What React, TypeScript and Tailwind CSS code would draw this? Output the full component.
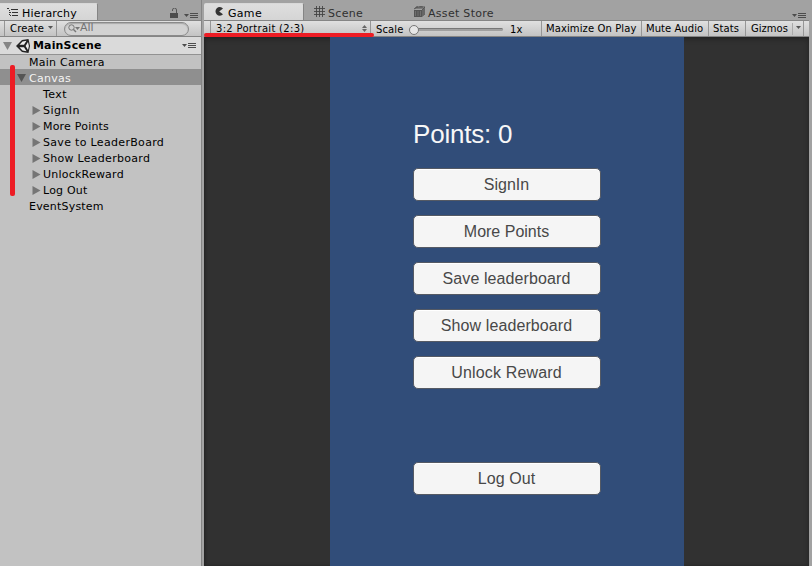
import React from "react";

function MenuIcon() {
  return (
    <svg className="block shrink-0" width="14" height="7" viewBox="0 0 14 7">
      <path d="M0 2h5L2.5 5z" fill="#4c4c4c" />
      <path d="M6 1.5h8M6 3.5h8M6 5.5h8" stroke="#4c4c4c" strokeWidth="1" />
    </svg>
  );
}

function Arrow({ down = false }: { down?: boolean }) {
  return (
    <svg className={down ? "block shrink-0" : "mb-[2px] block shrink-0"} width="9" height="9" viewBox="0 0 9 9">
      <path d={down ? "M0 1h9L4.5 9z" : "M0.5 0v9L8.5 4.5z"} fill={down ? "#555" : "#757575"} />
    </svg>
  );
}

const children = [
  { name: "Text", leaf: true, cls: "tracking-[0.4px]" },
  { name: "SignIn", cls: "tracking-[0.45px]" },
  { name: "More Points", cls: "tracking-[0.2px]" },
  { name: "Save to LeaderBoard", cls: "tracking-[0.32px]" },
  { name: "Show Leaderboard", cls: "tracking-[0.28px]" },
  { name: "UnlockReward", cls: "tracking-[0.22px]" },
  { name: "Log Out", cls: "tracking-[0.2px]" },
];

function Hierarchy() {
  return (
    <section className="relative flex h-full w-[202px] shrink-0 flex-col border-r border-[#858585] bg-[#c2c2c2]">
      <header className="flex h-5 items-end bg-[#a2a2a2]">
        <div className="flex h-[17px] w-[98px] items-center rounded-tr-[2px] border-t border-r border-[#858585] border-t-[#d8d8d8] bg-gradient-to-b from-[#dedede] to-[#d5d5d5] pl-[7px]">
          <svg className="mr-[3px] block shrink-0" width="12" height="9" viewBox="0 0 12 9">
            <path d="M0 0.5h2M4 1.5h7M5 4.5h6M5 7.5h6M2 2.5h1M2 4.5h2M2 6.5h1M3 7.5h1" stroke="#333" strokeWidth="1" />
          </svg>
          <span className="relative top-[2px] text-[11px] tracking-[0.2px]">Hierarchy</span>
        </div>
        <svg className="mb-[2px] ml-[72px] block" width="8" height="10" viewBox="0 0 8 10">
          <path d="M2.5 3V2a2 2 0 0 1 4 0v3" fill="none" stroke="#555" />
          <path d="M0 5h8v5H0z" fill="#4c4c4c" />
        </svg>
        <div className="mb-[1px] ml-[6px]"><MenuIcon /></div>
      </header>
      <div className="flex h-[17px] shrink-0 items-center border-y border-[#858585] bg-gradient-to-b from-[#e0e0e0] to-[#c3c3c3] pl-1">
        <div className="flex h-full w-[53px] items-center border-x border-[#969696] pl-[5px]">
          <span className="text-[10px] tracking-[0.15px]">Create</span>
          <svg className="mb-[2px] ml-[4px] block" width="5" height="3"><path d="M0 0h5L2.5 3z" fill="#555" /></svg>
        </div>
        <div className="ml-[7px] flex h-[14px] w-[125px] items-center rounded-full border border-[#8a8a8a] bg-[#d2d2d2] pl-[3px] shadow-[inset_0_1px_1px_#aaa]">
          <svg className="block" width="12" height="9" viewBox="0 0 12 9">
            <circle cx="3.5" cy="3.5" r="2.7" fill="none" stroke="#777" />
            <path d="M5.5 5.5L8 8" stroke="#777" strokeWidth="1.4" /><path d="M7 3h5L9.5 6z" fill="#777" />
          </svg>
          <span className="relative -top-px text-[11px] leading-3 text-[#737373]">All</span>
        </div>
      </div>
      <div className="flex h-[18px] shrink-0 items-center border-b border-[#929292] bg-[#dadada] pl-[3px]">
        <svg className="block" width="9" height="9"><path d="M0 1h9L4.5 9z" fill="#858585" /></svg>
        <svg className="mr-[3px] ml-[4px] block" width="14" height="14" viewBox="0 0 14 14">
          <path d="M0 7L6 1L12.5 0L14 7L12.5 14L6 13Z" fill="#222" />
          <path d="M3.5 5.7L6.5 2.6L10.5 1.7L8 5.7ZM3.5 8.3L6.5 11.4L10.5 12.3L8 8.3ZM9.6 7L12 3L12.9 7L12 11Z" fill="#eee" />
        </svg>
        <span className="relative top-px text-[11px] font-bold tracking-[0.15px]">MainScene</span>
        <div className="ml-auto mr-[5px]"><MenuIcon /></div>
      </div>
      <div className="text-[11px] leading-4 tracking-[0.25px]">
        <div className="h-4 pl-[29px]">Main Camera</div>
        <div className="-mt-[2px] mb-[2px] flex h-4 items-center bg-[#8f8f8f] pl-[17px] text-[#f4f4f4]">
          <Arrow down /><span className="relative top-[2px] ml-[3px]">Canvas</span>
        </div>
        {children.map((item) => (
          <div key={item.name} className="flex h-4 items-center pl-[32px]">
            <div className="w-[11px]">{!item.leaf && <Arrow />}</div>
            <span className={item.cls}>{item.name}</span>
          </div>
        ))}
        <div className="h-4 pl-[29px] tracking-[0.2px]">EventSystem</div>
      </div>
      <div className="absolute top-[65px] left-[10px] h-[131px] w-[5px] rounded-[2px] bg-[#ed1c24]" />
    </section>
  );
}

function GameButton({ label, className = "" }: { label: string; className?: string }) {
  return (
    <button className={`flex h-[33px] w-[188px] shrink-0 items-center justify-center rounded-[5px] border border-[#555a64] bg-[#f5f5f5] pt-px pr-px font-['Liberation_Sans',sans-serif] text-[16px] leading-none text-[#484848] shadow-[inset_0_1px_0_white] ${className}`}>
      {label}
    </button>
  );
}

function GamePanel() {
  return (
    <section className="relative flex h-full min-w-0 flex-1 flex-col">
      <header className="flex h-5 shrink-0 items-end bg-[#a2a2a2] text-[11px] tracking-[0.3px]">
        <div className="flex h-[17px] w-[100px] items-center rounded-t-[2px] border-t border-r border-[#858585] border-t-[#d8d8d8] bg-gradient-to-b from-[#dedede] to-[#d5d5d5] pl-[11px]">
          <svg className="mr-[4px] mb-[2px] block" width="9" height="9" viewBox="0 0 9 9"><path d="M8 1.5A4.3 4.3 0 1 0 8 7.2L4.2 4.4Z" fill="#333" /></svg>
          <span className="relative top-[2px]">Game</span>
        </div>
        <div className="ml-[10px] flex h-[17px] w-[100px] items-center text-[#303030]">
          <svg className="mr-[3px] block" width="11" height="11" viewBox="0 0 11 11"><path d="M2.5 0v11M5.5 0v11M8.5 0v11M0 2.5h11M0 5.5h11M0 8.5h11" stroke="#444" strokeWidth=".9" /></svg>
          <span className="relative top-[3px]">Scene</span>
        </div>
        <div className="flex h-[17px] items-center text-[#303030]">
          <svg className="mr-[3px] block" width="11" height="11" viewBox="0 0 11 11">
            <path d="M0 4h8v7H0z" fill="#555" /><path d="M0 3L3 1h8v7L8 10M8 4l3-3M2 3V1h2v2M6 3V0h2v3" fill="none" stroke="#555" />
            <path d="M8 4L11 2V8L8 11Z" fill="#666" />
            <path d="M1.5 5v5M4 5v5M6.5 5v5" stroke="#777" strokeWidth=".8" />
          </svg>
          <span className="relative top-[3px]">Asset Store</span>
        </div>
        <div className="mb-[1px] ml-auto mr-[6px]"><MenuIcon /></div>
      </header>
      <div className="mr-[3px] flex h-[17px] shrink-0 items-center border-y border-[#858585] bg-gradient-to-b from-[#e0e0e0] to-[#c3c3c3] pl-[6px] text-[10px] tracking-[0.25px]">
        <div className="flex h-full w-[161px] items-center justify-between border-x border-[#969696] pl-[5px] pr-[3px]">
          <span className="tracking-[0.3px]">3:2 Portrait (2:3)</span>
          <svg className="block" width="5" height="7"><path d="M0 3L2.5 0L5 3zM0 4h5L2.5 7z" fill="#666" /></svg>
        </div>
        <span className="relative top-px ml-[5px] w-[33px] tracking-[0.1px]">Scale</span>
        <div className="relative top-px h-[3px] w-[94px] rounded-full border-t border-[#777] bg-[#a0a0a0]">
          <div className="absolute -top-[4px] left-0 h-[10px] w-[10px] rounded-full border border-[#777] bg-[#e7e7e7]" />
        </div>
        <span className="relative top-px ml-[7px] w-[31px]">1x</span>
        <div className="flex h-full flex-1">
          <div className="flex w-[100px] items-center border-l border-[#969696] pl-1 whitespace-nowrap tracking-[0.1px]">Maximize On Play</div>
          <div className="flex w-[67px] items-center border-l border-[#969696] pl-1 whitespace-nowrap tracking-[0.05px]">Mute Audio</div>
          <div className="flex w-[37px] items-center border-l border-[#969696] pl-1 tracking-[0.1px]">Stats</div>
          <div className="flex w-[59px] items-center border-x border-[#969696] pl-[5px]">
            <span className="w-[41px] tracking-[0]">Gizmos</span>
            <div className="flex h-3 items-center border-l border-[#aaa] pl-[3px]"><svg className="mb-[2px] block" width="5" height="3"><path d="M0 0h5L2.5 3z" fill="#555" /></svg></div>
          </div>
        </div>
      </div>
      <main className="mr-[3px] flex min-h-0 flex-1 justify-center bg-[#313131] pl-[1px] shadow-[inset_0_2px_5px_#222,inset_1px_0_2px_#282828]">
        <div className="flex w-[354px] flex-col bg-[#314d79] pl-[83px]">
          <div className="mt-[82px] mb-[19px] font-['Liberation_Sans',sans-serif] text-[26px] leading-[30px] tracking-[-0.2px] text-[#f7f7f7]">Points: 0</div>
          <div className="flex flex-col gap-[14px]">
            <GameButton label="SignIn" />
            <GameButton label="More Points" />
            <GameButton label="Save leaderboard" className="tracking-[0.1px]" />
            <GameButton label="Show leaderboard" className="tracking-[0.1px]" />
            <GameButton label="Unlock Reward" className="tracking-[0.15px]" />
            <GameButton label="Log Out" className="mt-[59px] tracking-[0.1px]" />
          </div>
        </div>
      </main>
      <div className="absolute top-[33px] left-0 h-[4px] w-[170px] rounded-[2px] bg-[#ed1c24]" />
    </section>
  );
}

export default function App() {
  return (
    <div className="flex h-[566px] w-[812px] overflow-hidden bg-[#a2a2a2] font-['DejaVu_Sans',sans-serif] text-black">
      <Hierarchy />
      <div className="w-[2px] shrink-0 bg-[#a2a2a2]" />
      <GamePanel />
    </div>
  );
}
